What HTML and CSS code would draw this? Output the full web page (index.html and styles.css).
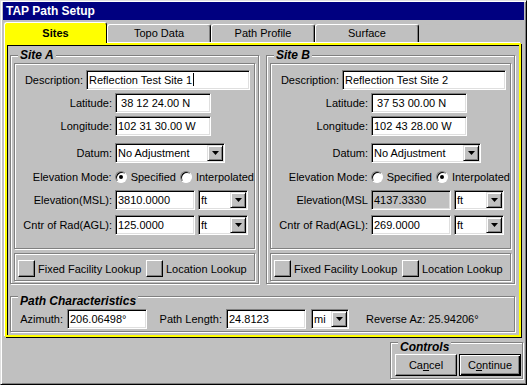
FILE: index.html
```html
<!DOCTYPE html>
<html lang="en">
<head>
  <meta charset="UTF-8">
  <title>TAP Path Setup</title>
  <link rel="stylesheet" href="styles.css">
</head>
<body>
  <div class="window">
    <div class="titlebar">TAP Path Setup</div>

    <div class="tabs">
      <div class="tab active">Sites</div>
      <div class="tab">Topo Data</div>
      <div class="tab">Path Profile</div>
      <div class="tab">Surface</div>
    </div>

    <div class="panel">
      <div class="sites">
        <!-- site A -->
        <div class="frame site">
          <span class="legend">Site A</span>
          <div class="frame fields">
            <div class="row desc"><label>Description:</label><div class="field w-desc">Reflection Test Site 1<span class="caret"></span></div></div>
            <div class="row"><label>Latitude:</label><div class="field w-coord"> 38 12 24.00 N</div></div>
            <div class="row lon"><label>Longitude:</label><div class="field w-coord">102 31 30.00 W</div></div>
            <div class="row datum"><label>Datum:</label>
              <div class="combo w-datum"><span class="val">No Adjustment</span><span class="drop"><svg width="7" height="4"><polygon points="0,0 7,0 3.5,4" fill="#000"/></svg></span></div>
            </div>
            <div class="row mode"><label>Elevation Mode:</label>
              <span class="radio on"></span><span class="opt">Specified</span>
              <span class="radio second"></span><span class="opt">Interpolated</span>
            </div>
            <div class="row elev"><label>Elevation(MSL):</label><div class="field w-num">3810.0000</div>
              <div class="combo w-unit"><span class="val">ft</span><span class="drop"><svg width="7" height="4"><polygon points="0,0 7,0 3.5,4" fill="#000"/></svg></span></div>
            </div>
            <div class="row"><label>Cntr of Rad(AGL):</label><div class="field w-num">125.0000</div>
              <div class="combo w-unit"><span class="val">ft</span><span class="drop"><svg width="7" height="4"><polygon points="0,0 7,0 3.5,4" fill="#000"/></svg></span></div>
            </div>
          </div>
          <div class="frame lookups">
            <div class="lookup first"><span class="tog"></span>Fixed Facility Lookup</div>
            <div class="lookup"><span class="tog"></span>Location Lookup</div>
          </div>
        </div>

        <!-- site B -->
        <div class="frame site">
          <span class="legend">Site B</span>
          <div class="frame fields">
            <div class="row desc"><label>Description:</label><div class="field w-desc">Reflection Test Site 2</div></div>
            <div class="row"><label>Latitude:</label><div class="field w-coord"> 37 53 00.00 N</div></div>
            <div class="row lon"><label>Longitude:</label><div class="field w-coord">102 43 28.00 W</div></div>
            <div class="row datum"><label>Datum:</label>
              <div class="combo w-datum"><span class="val">No Adjustment</span><span class="drop"><svg width="7" height="4"><polygon points="0,0 7,0 3.5,4" fill="#000"/></svg></span></div>
            </div>
            <div class="row mode"><label>Elevation Mode:</label>
              <span class="radio"></span><span class="opt">Specified</span>
              <span class="radio second on"></span><span class="opt">Interpolated</span>
            </div>
            <div class="row elev"><label>Elevation(MSL</label><div class="field w-num disabled">4137.3330</div>
              <div class="combo w-unit"><span class="val">ft</span><span class="drop"><svg width="7" height="4"><polygon points="0,0 7,0 3.5,4" fill="#000"/></svg></span></div>
            </div>
            <div class="row"><label>Cntr of Rad(AGL):</label><div class="field w-num">269.0000</div>
              <div class="combo w-unit"><span class="val">ft</span><span class="drop"><svg width="7" height="4"><polygon points="0,0 7,0 3.5,4" fill="#000"/></svg></span></div>
            </div>
          </div>
          <div class="frame lookups">
            <div class="lookup first"><span class="tog"></span>Fixed Facility Lookup</div>
            <div class="lookup"><span class="tog"></span>Location Lookup</div>
          </div>
        </div>
      </div>

      <div class="frame path">
        <span class="legend low">Path Characteristics</span>
        <label class="az-label">Azimuth:</label>
        <div class="field w-num">206.06498°</div>
        <label class="pl-label">Path Length:</label>
        <div class="field w-num">24.8123</div>
        <div class="combo w-mi"><span class="val">mi</span><span class="drop"><svg width="7" height="4"><polygon points="0,0 7,0 3.5,4" fill="#000"/></svg></span></div>
        <span class="rev">Reverse Az: 25.94206°</span>
      </div>
    </div>

    <div class="frame controls">
      <span class="legend low">Controls</span>
      <div class="btn">Ca<u>n</u>cel</div>
      <div class="btn default">C<u>o</u>ntinue</div>
    </div>
  </div>
</body>
</html>
```

FILE: styles.css
```css
body {
  margin: 0;
  font-family: "Liberation Sans", Arial, sans-serif;
  font-size: 11px;
  color: #000;
  background: #c0c0c0;
}
.window {
  width: 527px;
  height: 385px;
  box-sizing: border-box;
  background: #c0c0c0;
  border: 1px solid;
  border-color: #dfdfdf #000 #000 #dfdfdf;
  box-shadow: inset 1px 1px 0 #fff, inset -1px -1px 0 #808080;
  padding: 1px 2px 0 2px;
}
.titlebar {
  height: 18px;
  background: #000080;
  color: #fff;
  font-weight: bold;
  font-size: 12px;
  line-height: 18px;
  padding-left: 3px;
}

/* tabs */
.tabs {
  display: flex;
  align-items: flex-start;
  height: 21px;
  margin-top: 2px;
  padding-left: 1px;
}
.tab {
  width: 104px;
  height: 18px;
  margin-top: 2px;
  box-sizing: border-box;
  border: 1px solid #fff;
  border-right-color: #000;
  border-bottom: none;
  border-radius: 3px 3px 0 0;
  box-shadow: inset -1px 0 0 #808080;
  text-align: center;
  line-height: 17px;
}
.tab.active {
  width: 103px;
  height: 21px;
  margin-top: 0;
  background: #ffff00;
  font-weight: bold;
  line-height: 20px;
  box-shadow: none;
  position: relative;
  z-index: 1;
}

/* main panel with yellow frame */
.panel {
  margin: 0 3px 0 2px;
  border: 2px solid #ffff00;
  box-shadow: -1px -1px 0 #fff, 1px 1px 0 #000, inset 1px 1px 0 #000;
  padding: 10px 0 3px 3px;
}
.sites {
  display: flex;
  gap: 7px;
}
.frame {
  box-sizing: border-box;
  border: 1px solid #808080;
  box-shadow: inset 1px 1px 0 #fff, 1px 1px 0 #fff;
}
.legend {
  position: absolute;
  top: -7px;
  left: 7px;
  padding: 0 2px;
  background: #c0c0c0;
  font-size: 12px;
  line-height: 12px;
  font-weight: bold;
  font-style: italic;
}
.legend.low {
  top: -2px;
}
.site {
  position: relative;
  width: 249px;
  height: 229px;
  padding: 7px 3px 2px 3px;
}
.fields {
  height: 186px;
  margin-bottom: 4px;
  padding-top: 6px;
}

/* form rows */
.row {
  display: flex;
  align-items: center;
  height: 20px;
  margin-bottom: 3px;
}
.row label {
  width: 97px;
  margin-right: 3px;
  text-align: right;
  white-space: nowrap;
}
.row.desc label {
  width: 68px;
}
.row.lon { margin-bottom: 7px; }
.row.datum { margin-bottom: 6px; }
.row.mode { height: 16px; margin-bottom: 5px; }
.row.elev { margin-bottom: 5px; }

.field {
  box-sizing: border-box;
  height: 20px;
  background: #fff;
  border: 1px solid;
  border-color: #808080 #fff #fff #808080;
  box-shadow: inset 1px 1px 0 #000, inset -1px -1px 0 #dfdfdf;
  padding-left: 2px;
  line-height: 18px;
  white-space: pre;
  overflow: hidden;
}
.field.disabled {
  background: #c0c0c0;
}
.caret {
  display: inline-block;
  width: 1px;
  height: 13px;
  background: #000;
  vertical-align: -2px;
  margin-left: 1px;
}
.w-desc { width: 164px; }
.w-coord { width: 96px; }
.w-num { width: 80px; }
.w-datum { width: 110px; }
.w-unit { width: 50px; margin-left: 3px; }
.w-mi { width: 38px; margin-left: 5px; }

.combo {
  box-sizing: border-box;
  height: 20px;
  display: flex;
  background: #fff;
  border: 1px solid;
  border-color: #808080 #fff #fff #808080;
  box-shadow: inset 1px 1px 0 #000, inset -1px -1px 0 #dfdfdf;
  padding: 1px;
}
.combo .val {
  flex: 1;
  padding-left: 1px;
  line-height: 16px;
  white-space: nowrap;
  overflow: hidden;
}
.drop {
  box-sizing: border-box;
  width: 16px;
  height: 16px;
  display: flex;
  align-items: center;
  justify-content: center;
  background: #c0c0c0;
  border: 1px solid;
  border-color: #dfdfdf #000 #000 #dfdfdf;
  box-shadow: inset 1px 1px 0 #fff, inset -1px -1px 0 #808080;
}

/* radios */
.radio {
  position: relative;
  box-sizing: border-box;
  width: 12px;
  height: 12px;
  border-radius: 50%;
  background: #fff;
  border: 1px solid;
  border-color: #808080 #fff #fff #808080;
  box-shadow: inset 1px 1px 0 #000;
}
.radio.on::after {
  content: "";
  position: absolute;
  left: 3px;
  top: 3px;
  width: 4px;
  height: 4px;
  border-radius: 50%;
  background: #000;
}
.radio.second { margin-left: 4px; }
.opt { margin-left: 4px; }

/* lookup toggles */
.lookups {
  height: 28px;
  display: flex;
  align-items: center;
  padding: 3px 0 0 3px;
}
.lookup {
  display: flex;
  align-items: center;
  white-space: nowrap;
}
.lookup.first { width: 128px; }
.tog {
  box-sizing: border-box;
  width: 17px;
  height: 17px;
  margin-right: 3px;
  border: 1px solid;
  border-color: #fff #000 #000 #fff;
  box-shadow: inset -1px -1px 0 #808080;
}

/* path characteristics */
.path {
  position: relative;
  width: 505px;
  height: 36px;
  margin-top: 12px;
  display: flex;
  align-items: center;
  padding: 10px 0 0 7px;
}
.az-label,
.pl-label {
  text-align: right;
  margin-right: 4px;
  white-space: nowrap;
}
.az-label { width: 45px; }
.pl-label { width: 75px; }
.rev {
  margin-left: 17px;
  white-space: nowrap;
}

/* controls */
.controls {
  position: relative;
  width: 133px;
  height: 37px;
  margin: 5px 1px 0 auto;
  padding: 11px 0 0 4px;
  display: flex;
  align-items: flex-start;
  gap: 2px;
}
.btn {
  box-sizing: border-box;
  width: 62px;
  height: 22px;
  text-align: center;
  line-height: 20px;
  border: 1px solid;
  border-color: #fff #000 #000 #fff;
  box-shadow: inset -1px -1px 0 #808080;
}
.btn.default {
  border-color: #000;
  box-shadow: inset 1px 1px 0 #fff, inset -1px -1px 0 #000, inset -2px -2px 0 #808080;
}
```
